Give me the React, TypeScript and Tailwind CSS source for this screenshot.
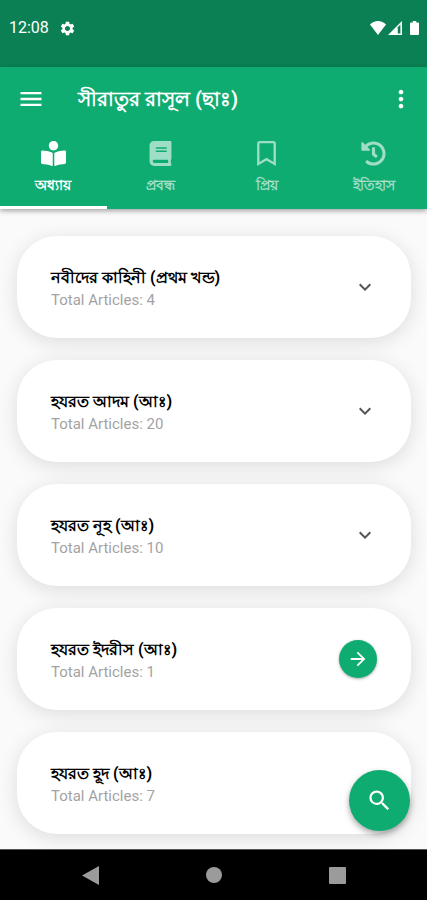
import { useState } from 'react';
import { FaBook, FaBookReader, FaHistory, FaRegBookmark } from 'react-icons/fa';
import { MdArrowForward, MdKeyboardArrowDown, MdMenu, MdMoreVert, MdSearch, MdSettings } from 'react-icons/md';
import clsx from 'clsx';

interface Chapter {
  title: string;
  articles: number;
}

const tabs = [
  { label: 'অধ্যায়', Icon: FaBookReader },
  { label: 'প্রবন্ধ', Icon: FaBook },
  { label: 'প্রিয়', Icon: FaRegBookmark },
  { label: 'ইতিহাস', Icon: FaHistory },
];

const chapters: Chapter[] = [
  { title: 'নবীদের কাহিনী (প্রথম খন্ড)', articles: 4 },
  { title: 'হযরত আদম (আঃ)', articles: 20 },
  { title: 'হযরত নূহ (আঃ)', articles: 10 },
  { title: 'হযরত ইদরীস (আঃ)', articles: 1 },
  { title: 'হযরত হূদ (আঃ)', articles: 7 },
];

const StatusBar = () => (
  <div className="flex h-[67px] items-start justify-between bg-[#0b8054] pt-4 pr-2 pl-[9px] text-white">
    <div className="flex items-center gap-2.5 text-base leading-6">
      <span>12:08</span>
      <MdSettings size={17} />
    </div>
    <div className="flex h-6 items-center">
      <svg width="16" height="14" viewBox="0 0 16 14" fill="currentColor">
        <path d="M8 14 0 3.400C2.200 1.300 5 0 8 0s5.800 1.300 8 3.400Z" />
      </svg>
      <svg className="ml-0.5" width="14" height="14" viewBox="0 0 14 14">
        <path d="M0 14 14 0v14Z" fill="currentColor" />
        <path d="M9.800 6.200 12.400 3.600v9h-2.600Z" fill="#0b8054" />
      </svg>
      <svg className="ml-2" width="9" height="14" viewBox="0 0 9 14" fill="currentColor">
        <path d="M2.800 0h3.400v1.400H8a1 1 0 0 1 1 1V13a1 1 0 0 1-1 1H1a1 1 0 0 1-1-1V2.400a1 1 0 0 1 1-1h1.800Z" />
      </svg>
    </div>
  </div>
);

const ChapterCard = ({ chapter }: { chapter: Chapter }) => {
  const isSingle = chapter.articles === 1;

  return (
    <li className="flex h-[102px] items-center justify-between rounded-[40px] bg-white px-[34px] shadow-[0_4px_20px_rgba(0,0,0,0.12)]">
      <div className="pt-0.5">
        <h2 className="text-base leading-6 font-bold text-black">{chapter.title}</h2>
        <p className="text-[15px] leading-5 text-[#a3a3a3]">Total Articles: {chapter.articles}</p>
      </div>
      {isSingle ? (
        <button
          aria-label="Open"
          className="flex size-[38px] items-center justify-center rounded-full bg-[#0fac71] text-white shadow-[0_1px_3px_rgba(0,0,0,0.35)]"
        >
          <MdArrowForward size={22} />
        </button>
      ) : (
        <button aria-label="Expand" className="py-1 text-[#555]">
          <MdKeyboardArrowDown size={24} />
        </button>
      )}
    </li>
  );
};

const App = () => {
  const [active, setActive] = useState(0);

  return (
    <div className="flex min-h-screen flex-col bg-[#fafafa] font-['Roboto',sans-serif]">
      <StatusBar />

      {/* App bar and tabs */}
      <header className="bg-[#0fac71] text-white shadow-[0_2px_5px_rgba(0,0,0,0.35)]">
        <div className="flex h-16 items-center pr-3 pl-[17px]">
          <button aria-label="Menu">
            <MdMenu size={28} />
          </button>
          <h1 className="ml-[33px] flex-1 text-xl leading-8 font-bold">সীরাতুর রাসূল (ছাঃ)</h1>
          <button aria-label="More options">
            <MdMoreVert size={28} />
          </button>
        </div>
        <nav className="grid h-[78px] grid-cols-4">
          {tabs.map(({ label, Icon }, i) => (
            <button
              key={label}
              onClick={() => setActive(i)}
              className={clsx(
                'flex flex-col items-center gap-[9px] border-b-3 pt-[10px]',
                active === i ? 'border-white text-white' : 'border-transparent text-white/60'
              )}
            >
              <Icon size={25} />
              <span className="text-sm leading-5 font-bold">{label}</span>
            </button>
          ))}
        </nav>
      </header>

      <main className="flex-1 pt-[27px] pr-4 pb-[15px] pl-[17px]">
        <ul className="flex flex-col gap-[22px]">
          {chapters.map((chapter) => (
            <ChapterCard key={chapter.title} chapter={chapter} />
          ))}
        </ul>
      </main>

      {/* Search button floats above the system navigation */}
      <button
        aria-label="Search"
        className="fixed right-[17px] bottom-[69px] flex size-[61px] items-center justify-center rounded-full bg-[#0fac71] text-white shadow-[0_3px_6px_rgba(0,0,0,0.35)]"
      >
        <MdSearch size={27} />
      </button>

      <footer className="sticky bottom-0 grid h-[51px] grid-cols-[180px_1fr_180px] items-center border-t border-[#555] bg-black text-[#9b9b9b]">
        <button aria-label="Back" className="flex justify-center">
          <svg width="17" height="19" viewBox="0 0 17 19" fill="currentColor">
            <path d="M17 0v19L0 9.500Z" />
          </svg>
        </button>
        <button aria-label="Home" className="size-4 justify-self-center rounded-full bg-current" />
        <button aria-label="Recent apps" className="size-[17px] justify-self-center rounded-[1px] bg-current" />
      </footer>
    </div>
  );
};

export default App;
